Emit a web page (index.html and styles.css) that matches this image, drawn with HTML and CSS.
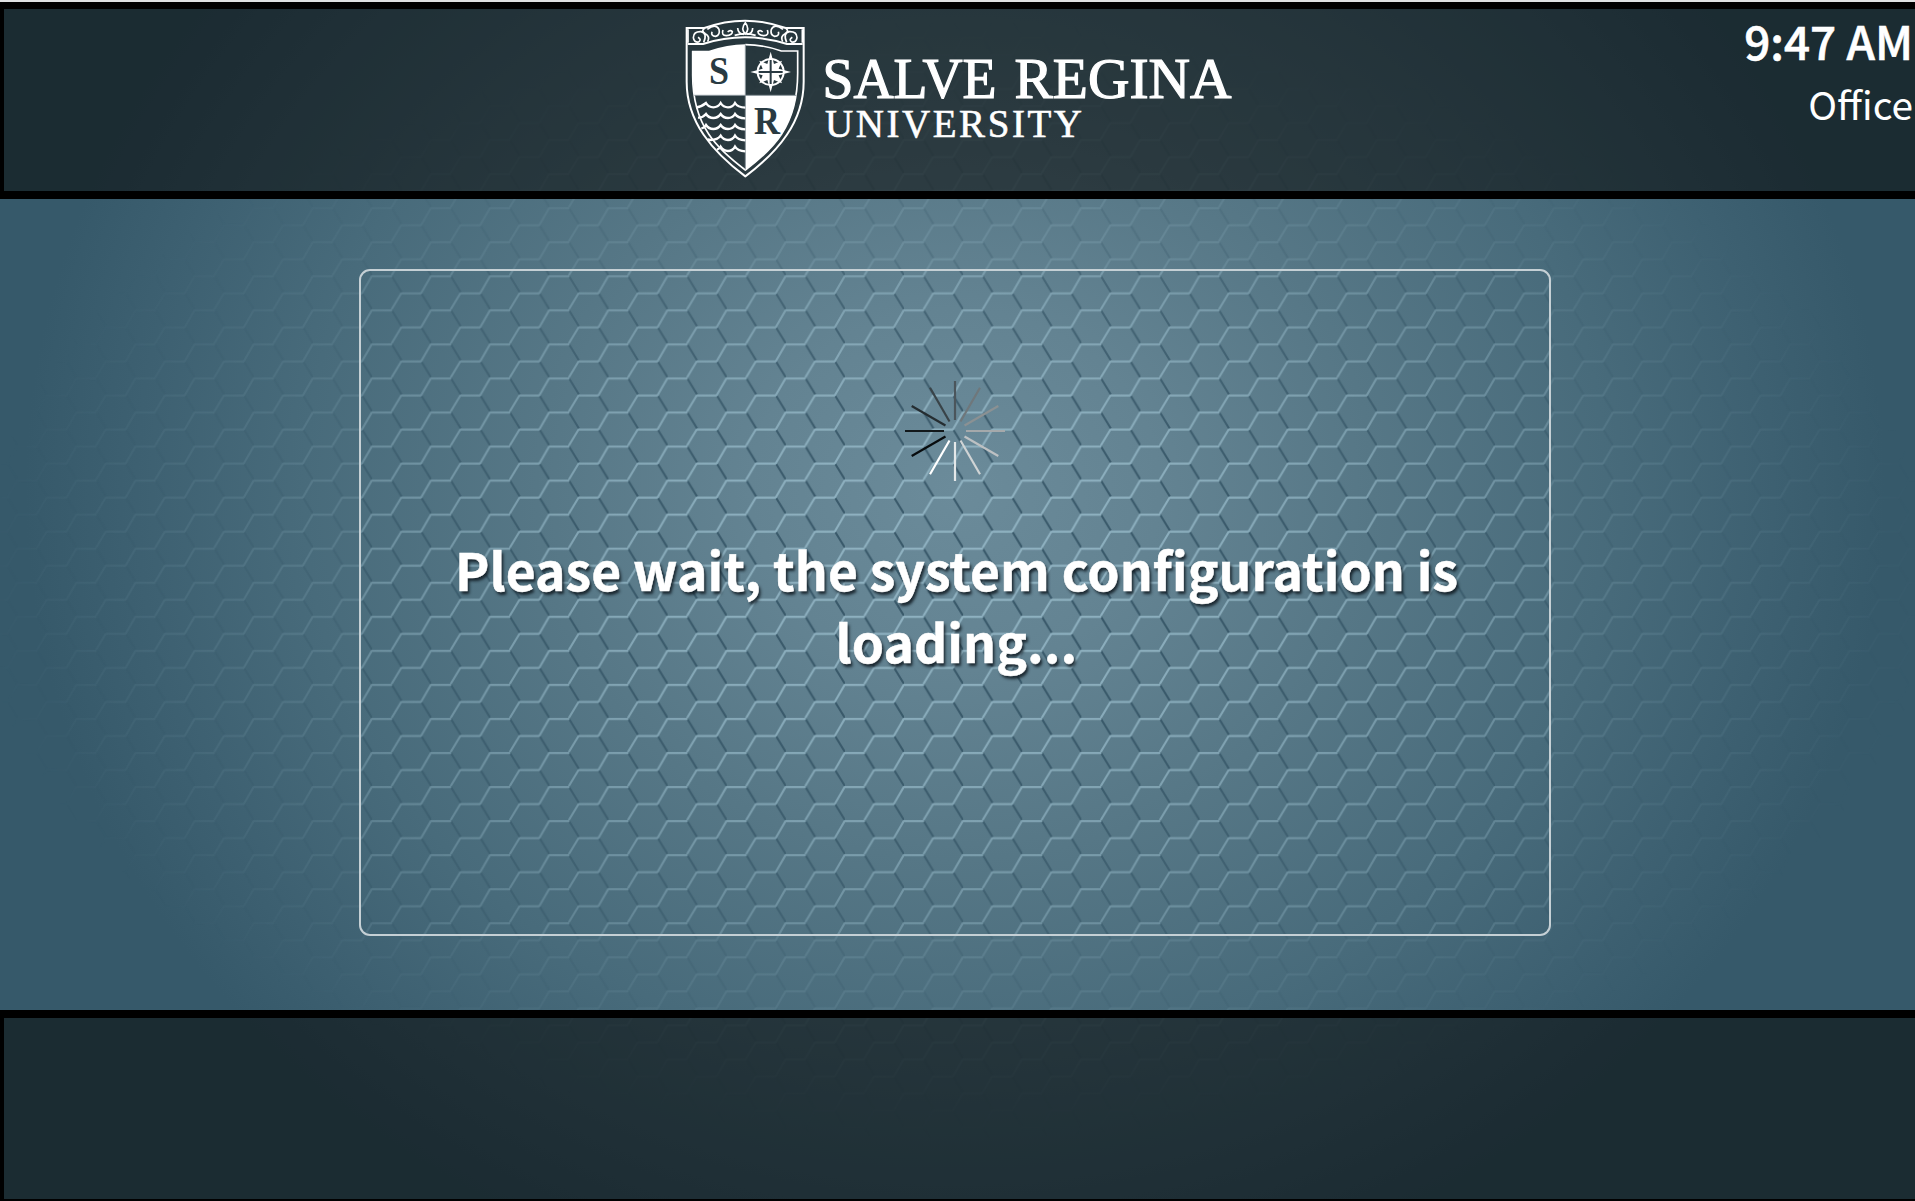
FILE: index.html
```html
<!DOCTYPE html>
<html lang="en">
<head>
<meta charset="utf-8">
<title>Salve Regina University</title>
<link rel="stylesheet" href="styles.css">
</head>
<body>
<div class="screen">
  <svg class="backdrop" width="1915" height="1201" aria-hidden="true">
    <defs>
      <pattern id="hex" width="59.1" height="34.05" patternUnits="userSpaceOnUse" patternTransform="translate(726.7 786)">
        <g fill="none" stroke-width="2.1">
          <path class="hex-dark" d="M20 1.5L29.5 17M49.5 18.5L59.1 34.05"/>
          <path class="hex-light" d="M0 1.1H20M29.5 18.1H49.5M49 18L59.1 .5M19.5 34.05L29.5 17.5"/>
        </g>
      </pattern>
      <radialGradient id="fade" gradientUnits="userSpaceOnUse" cx="0" cy="0" r="1" gradientTransform="translate(955 580) scale(980 560)">
        <stop offset="0" stop-color="#fff"/>
        <stop offset=".3" stop-color="#fff" stop-opacity=".82"/>
        <stop offset=".6" stop-color="#fff" stop-opacity=".4"/>
        <stop offset="1" stop-color="#fff" stop-opacity="0"/>
      </radialGradient>
      <mask id="fade-mask" maskUnits="userSpaceOnUse" x="0" y="0" width="1915" height="1201">
        <rect width="1915" height="1201" fill="url(#fade)" opacity=".62"/>
        <rect x="360" y="270" width="1190" height="665" rx="10" fill="url(#fade)" opacity=".75"/>
      </mask>
    </defs>
    <rect width="1915" height="1201" fill="url(#hex)" mask="url(#fade-mask)"/>
  </svg>

  <header class="bar bar-top">
    <svg class="logo" width="551" height="181" viewBox="684 9 551 181" role="img" aria-label="Salve Regina University">
      <g transform="translate(670 0) scale(.33333)" stroke-linejoin="miter">
        <path d="M50 84H103Q225 40 347 84H401V245C401 365 325 455 226 529C127 455 50 365 50 245Z" fill="none" stroke="#fff" stroke-width="6"/>
        <path d="M53 132H99Q225 92 351 132H398" fill="none" stroke="#fff" stroke-width="6"/>
        <path d="M66 152H117Q171 134 226 133V286H73Q66 230 66 152Z" fill="#fff"/>
        <path d="M226 286H378C366 390 294 459 226 510Z" fill="#fff"/>
        <path d="M226 134Q282 134 334 153H383V220C383 380 307 449 226 510C145 449 66 380 68 220V153" fill="none" stroke="#fff" stroke-width="5"/>
        <path d="M226 136V508M73 286H379" fill="none" stroke="#8b969b" stroke-width="3"/>
        <g class="waves">
          <path d="M78 322Q94 321 108 309Q116 322 130 322T152 309Q160 322 174 322T195 309Q203 322 226 323"/>
          <path d="M84 353Q98 354 108 342Q116 354 130 354T152 342Q160 354 174 354T195 342Q203 354 226 355"/>
          <path d="M94 385Q103 384 108 375Q116 387 130 387T152 375Q160 387 174 387T195 375Q203 387 226 388"/>
          <path d="M113 418L122 420Q143 420 152 407Q160 420 174 420T195 407Q203 420 226 421"/>
          <path d="M141 449Q149 447 152 440Q160 453 174 453T195 440Q203 453 226 454"/>
        </g>
        <g class="scroll">
          <path d="M54 88V128M397 88V128"/>
          <path d="M101 127Q113 100 93 95Q70 94 70 113Q72 128 86 126Q96 119 84 112M103 86Q92 92 106 101Q121 109 113 125"/>
          <path d="M350 127Q338 100 358 95Q381 94 381 113Q379 128 365 126Q355 119 367 112M348 86Q359 92 345 101Q330 109 338 125"/>
          <path d="M112 88Q137 69 147 88Q151 105 137 109Q122 108 126 95M159 90Q153 106 169 107Q187 105 187 95Q181 88 173 96"/>
          <path d="M339 88Q314 69 304 88Q300 105 314 109Q329 108 325 95M292 90Q298 106 282 107Q264 105 264 95Q270 88 278 96"/>
          <path d="M226 68Q211 86 226 102Q240 86 226 68ZM222 103Q204 102 203 84M230 103Q248 102 248 84M194 106Q226 96 257 106"/>
        </g>
        <g transform="translate(302 216)">
          <circle r="39" fill="none" stroke="#fff" stroke-width="6"/>
          <path d="M0 -61L10 -24L34 -34L24 -10L61 0L24 10L34 34L10 24L0 61L-10 24L-34 34L-24 10L-61 0L-24 -10L-34 -34L-10 -24Z" fill="#fff"/>
          <path d="M-14 -14L14 14M14 -14L-14 14" stroke="#fff" stroke-width="9"/>
          <path d="M0 -36V36M-36 0H36" stroke="#293a42" stroke-width="6"/>
        </g>
        <text class="crest-letter" x="117" y="251" textLength="60" lengthAdjust="spacingAndGlyphs">S</text>
        <text class="crest-letter" x="252" y="402" textLength="78" lengthAdjust="spacingAndGlyphs">R</text>
      </g>
      <text class="word-large" x="822.5" y="97.5" textLength="174" lengthAdjust="spacingAndGlyphs">SALVE</text>
      <text class="word-large" x="1014.5" y="97.5" textLength="217" lengthAdjust="spacingAndGlyphs">REGINA</text>
      <text class="word-small" x="825" y="137" textLength="257" lengthAdjust="spacing">UNIVERSITY</text>
    </svg>
    <div class="status">
      <div class="clock">9:47 AM</div>
      <div class="room">Office</div>
    </div>
  </header>

  <main class="stage">
    <section class="dialog">
      <svg class="spinner" width="104" height="104" viewBox="-52 -52 104 104" aria-hidden="true">
        <g stroke-width="2.2">
          <path d="M0 -11V-50" stroke="#4b555b"/>
          <path d="M0 -11V-50" stroke="#6f777b" transform="rotate(30)"/>
          <path d="M0 -11V-50" stroke="#8b9193" transform="rotate(60)"/>
          <path d="M0 -11V-50" stroke="#a5a9ab" transform="rotate(90)"/>
          <path d="M0 -11V-50" stroke="#bdc1c3" transform="rotate(120)"/>
          <path d="M0 -11V-50" stroke="#d0d4d5" transform="rotate(150)"/>
          <path d="M0 -11V-50" stroke="#e4e8e9" transform="rotate(180)"/>
          <path d="M0 -11V-50" stroke="#fff" transform="rotate(210)"/>
          <path d="M0 -11V-50" stroke="#080c0e" transform="rotate(240)"/>
          <path d="M0 -11V-50" stroke="#12181b" transform="rotate(270)"/>
          <path d="M0 -11V-50" stroke="#252d31" transform="rotate(300)"/>
          <path d="M0 -11V-50" stroke="#394348" transform="rotate(330)"/>
        </g>
      </svg>
      <p class="message">Please wait, the system configuration is loading...</p>
    </section>
  </main>

  <footer class="bar bar-bottom"></footer>
</div>
</body>
</html>
```
FILE: styles.css
```css
* {
  box-sizing: border-box;
}

body {
  margin: 0;
  background: #36596a;
  font-family: "Noto Sans CJK SC", "Noto Sans", sans-serif;
  color: #fff;
}

.screen {
  position: relative;
  width: 1915px;
  height: 1201px;
  overflow: hidden;
  display: grid;
  grid-template-rows: 199px 811px 191px;
  background: radial-gradient(ellipse 930px 820px at 955px 490px, #6b8b9a 0%, #638392 22%, #567786 45%, #486b7b 70%, #3d6071 88%, #36596a 100%);
}

.backdrop {
  position: absolute;
  inset: 0;
}

.hex-light {
  stroke: #9dc0cf;
  stroke-opacity: .85;
}

.hex-dark {
  stroke: #29495a;
  stroke-opacity: .85;
}

.bar {
  position: relative;
  border: solid #000;
  background: rgba(6, 5, 4, .54);
}

.bar-top {
  display: grid;
  grid-template-columns: 1fr auto 1fr;
  border-width: 7px 0 8px 4px;
  margin-top: 2px;
}

.bar-top::before {
  content: "";
  position: absolute;
  top: -9px;
  left: -4px;
  right: 0;
  height: 2px;
  background: #dfe1e2;
}

.bar-bottom {
  border-width: 8px 0 2px 4px;
}

.logo {
  grid-column: 2;
  display: block;
}

.crest-letter {
  font: bold 118px "Liberation Serif", serif;
  fill: #293a42;
}

.word-large {
  font: 56px "Liberation Serif", serif;
  fill: #fff;
  stroke: #fff;
  stroke-width: 1.2px;
}

.word-small {
  font: 39px "Liberation Serif", serif;
  fill: #fff;
  stroke: #fff;
  stroke-width: .6px;
}

.waves path {
  fill: none;
  stroke: #fff;
  stroke-width: 7;
}

.scroll path {
  fill: none;
  stroke: #fff;
  stroke-width: 5;
}

.status {
  padding-right: 2px;
  text-align: right;
}

.clock {
  font-size: 45.8px;
  font-weight: 500;
  line-height: 62px;
  -webkit-text-stroke: .6px #fff;
}

.room {
  font-size: 38.8px;
  font-weight: 400;
  line-height: 64px;
}

.stage {
  position: relative;
  display: flex;
  justify-content: center;
  align-items: flex-start;
  padding: 70px 5px 0 0;
}

.dialog {
  width: 1192px;
  height: 667px;
  display: flex;
  flex-direction: column;
  align-items: center;
  padding-top: 108px;
  border: 2px solid #c5d0d5;
  border-radius: 11px;
}

.message {
  width: 1060px;
  margin: 50px 0 0;
  padding-left: 3px;
  font-size: 51.7px;
  font-weight: 700;
  line-height: 71.6px;
  text-align: center;
  text-shadow: 2px 3px 3px rgba(15, 25, 32, .85);
  -webkit-text-stroke: .5px #fff;
}
```
